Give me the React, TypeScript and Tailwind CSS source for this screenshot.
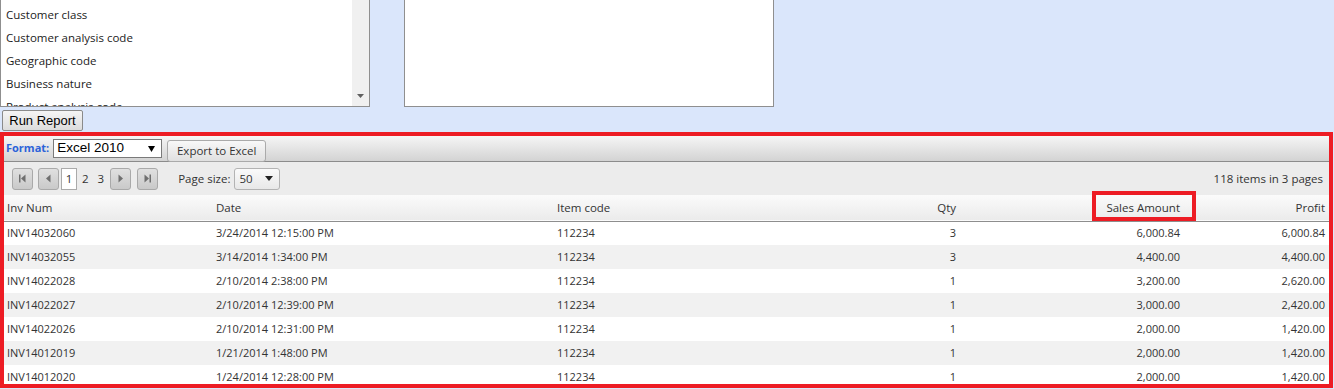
const listItems = [
  'Customer class',
  'Customer analysis code',
  'Geographic code',
  'Business nature',
  'Product analysis code',
];

const rows = [
  ['INV14032060', '3/24/2014 12:15:00 PM', '112234', '3', '6,000.84', '6,000.84'],
  ['INV14032055', '3/14/2014 1:34:00 PM', '112234', '3', '4,400.00', '4,400.00'],
  ['INV14022028', '2/10/2014 2:38:00 PM', '112234', '1', '3,200.00', '2,620.00'],
  ['INV14022027', '2/10/2014 12:39:00 PM', '112234', '1', '3,000.00', '2,420.00'],
  ['INV14022026', '2/10/2014 12:31:00 PM', '112234', '1', '2,000.00', '1,420.00'],
  ['INV14012019', '1/21/2014 1:48:00 PM', '112234', '1', '2,000.00', '1,420.00'],
  ['INV14012020', '1/24/2014 12:28:00 PM', '112234', '1', '2,000.00', '1,420.00'],
];

function PagerButton({ kind }: { kind: 'first' | 'prev' | 'next' | 'last' }) {
  return (
    <div className="flex h-[22px] w-[21px] items-center justify-center rounded-[3px] border border-[#a9a9a9] bg-gradient-to-b from-[#e0e0e0] to-[#c9c9c9]">
      <svg width="9" height="9" viewBox="0 0 9 9" className="text-[#6f6f6f]">
        {kind === 'first' && (
          <>
            <rect x="1" y="0.5" width="1.5" height="8" fill="currentColor" />
            <path d="M7.5 0.5 L3 4.5 L7.5 8.5 Z" fill="currentColor" />
          </>
        )}
        {kind === 'prev' && <path d="M6.5 0.5 L2 4.5 L6.5 8.5 Z" fill="currentColor" />}
        {kind === 'next' && <path d="M2.5 0.5 L7 4.5 L2.5 8.5 Z" fill="currentColor" />}
        {kind === 'last' && (
          <>
            <path d="M1.5 0.5 L6 4.5 L1.5 8.5 Z" fill="currentColor" />
            <rect x="6.5" y="0.5" width="1.5" height="8" fill="currentColor" />
          </>
        )}
      </svg>
    </div>
  );
}

export default function App() {
  return (
    <div className="h-[389px] w-[1334px] overflow-hidden bg-[#dae6fb] font-['Open_Sans',sans-serif] text-[11px] text-[#333]">
      {/* filter lists */}
      <div className="flex h-[107px]">
        <div className="flex h-[107px] w-[370px] border-x border-b border-[#8f8f8f] bg-white">
          <ul className="flex-1 overflow-hidden pt-[3px] text-[11.5px] text-[#222]">
            {listItems.map((it) => (
              <li key={it} className="flex h-[23px] items-center pl-[5px]">
                {it}
              </li>
            ))}
          </ul>
          <div className="flex w-[17px] flex-col justify-end bg-[#f0f0f0] pb-[8px]">
            <svg width="17" height="4" viewBox="0 0 17 4">
              <path d="M5 0 L12 0 L8.5 4 Z" fill="#606060" />
            </svg>
          </div>
        </div>
        <div className="ml-[34px] h-[107px] w-[370px] border-x border-b border-[#8f8f8f] bg-white" />
      </div>

      <button
        type="button"
        className="ml-[2px] mt-[3px] flex h-[21px] w-[81px] items-center justify-center rounded-[2px] border border-[#8a8a8a] bg-gradient-to-b from-[#f5f5f5] to-[#dcdcdc] font-['Liberation_Sans',sans-serif] text-[13px] text-black"
      >
        Run Report
      </button>

      {/* report grid */}
      <div className="relative mt-[1px] h-[256px] w-[1333px] overflow-hidden border-4 border-[#ed1c24] bg-white">
        <div className="flex h-[26px] items-center border-b border-[#8c8c8c] bg-gradient-to-b from-[#f6f6f6] to-[#d3d3d3] pl-[2px]">
          <span className="text-[11px] font-bold text-[#2b62d9]">Format:</span>
          <div className="ml-[4px] flex h-[19px] w-[109px] items-center justify-between border border-[#7a7a7a] bg-white pl-[3px] pr-[6px] font-['Liberation_Sans',sans-serif] text-[13.5px] text-black">
            <span>Excel 2010</span>
            <svg width="7" height="6" viewBox="0 0 7 6">
              <path d="M0 0 L7 0 L3.5 6 Z" fill="#000" />
            </svg>
          </div>
          <button
            type="button"
            className="ml-[5px] mt-[4px] flex h-[22px] w-[99px] items-center justify-center rounded-[3px] border border-[#aaa] bg-gradient-to-b from-[#f8f8f8] to-[#e0e0e0] text-[11.5px] text-[#333]"
          >
            Export to Excel
          </button>
        </div>

        <div className="flex h-[33px] items-center bg-[#ececec] pl-[8px] pr-[6px] text-[11.5px]">
          <PagerButton kind="first" />
          <div className="ml-[5px]">
            <PagerButton kind="prev" />
          </div>
          <div className="ml-[2px] flex h-[22px] w-[16px] items-center justify-center border border-[#aaa] bg-white">1</div>
          <span className="ml-[5px]">2</span>
          <span className="ml-[9px]">3</span>
          <div className="ml-[6px]">
            <PagerButton kind="next" />
          </div>
          <div className="ml-[6px]">
            <PagerButton kind="last" />
          </div>
          <span className="ml-[20px]">Page size:</span>
          <div className="ml-[4px] flex h-[22px] w-[46px] items-center justify-between rounded-[3px] border border-[#b3b3b3] bg-gradient-to-b from-[#fafafa] to-[#e8e8e8] pl-[4px] pr-[6px]">
            <span>50</span>
            <svg width="8" height="5" viewBox="0 0 8 5">
              <path d="M0 0 L8 0 L4 5 Z" fill="#222" />
            </svg>
          </div>
          <span className="ml-auto">118 items in 3 pages</span>
        </div>

        <table className="w-[1325px] table-fixed border-collapse">
          <colgroup>
            <col className="w-[209px]" />
            <col className="w-[341px]" />
            <col className="w-[203px]" />
            <col className="w-[203px]" />
            <col className="w-[224px]" />
            <col className="w-[145px]" />
          </colgroup>
          <thead>
            <tr className="h-[26px] border-b border-[#8e8e8e] bg-gradient-to-b from-[#fbfbfb] to-[#ebebeb] text-[11.5px]">
              <th className="pl-[3px] text-left font-normal">Inv Num</th>
              <th className="pl-[3px] text-left font-normal">Date</th>
              <th className="pl-[3px] text-left font-normal">Item code</th>
              <th className="pr-[4px] text-right font-normal">Qty</th>
              <th className="pr-[4px] text-right font-normal">Sales Amount</th>
              <th className="pr-[4px] text-right font-normal">Profit</th>
            </tr>
          </thead>
          <tbody>
            {rows.map((r, i) => (
              <tr key={r[0]} className={i % 2 === 1 ? 'h-[24px] bg-[#f1f1f1]' : 'h-[24px] bg-white'}>
                <td className="pl-[3px]">{r[0]}</td>
                <td className="pl-[3px]">{r[1]}</td>
                <td className="pl-[3px]">{r[2]}</td>
                <td className="pr-[4px] text-right">{r[3]}</td>
                <td className="pr-[4px] text-right">{r[4]}</td>
                <td className="pr-[4px] text-right">{r[5]}</td>
              </tr>
            ))}
          </tbody>
        </table>

        {/* highlight around the Sales Amount header */}
        <div className="absolute left-[1088px] top-[55px] z-10 h-[30px] w-[104px] border-4 border-[#ed1c24]" />
      </div>
    </div>
  );
}
